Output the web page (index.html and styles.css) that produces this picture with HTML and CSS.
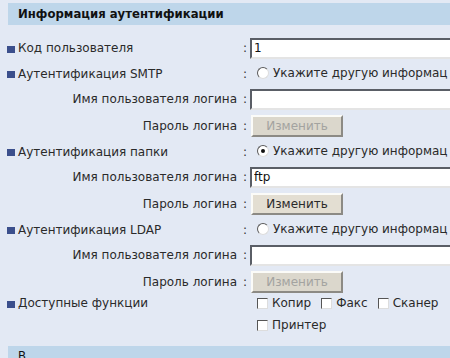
FILE: index.html
```
<!DOCTYPE html>
<html lang="ru">
<head>
  <meta charset="UTF-8">
  <title>Информация аутентификации</title>
  <link rel="stylesheet" href="styles.css">
</head>
<body>
  <div class="panel">
    <div class="section-head">Информация аутентификации</div>

    <div class="form">
      <div class="row row-input">
        <div class="label main"><span class="bullet"></span>Код пользователя</div>
        <div class="colon">:</div>
        <div class="value"><input class="text" type="text" value="1"></div>
      </div>

      <div class="row row-radio">
        <div class="label main"><span class="bullet"></span>Аутентификация SMTP</div>
        <div class="colon">:</div>
        <div class="value"><label class="opt"><span class="radio"></span>Укажите другую информац</label></div>
      </div>
      <div class="row row-input">
        <div class="label sub">Имя пользователя логина</div>
        <div class="colon">:</div>
        <div class="value"><input class="text" type="text" value=""></div>
      </div>
      <div class="row row-button">
        <div class="label sub">Пароль логина</div>
        <div class="colon">:</div>
        <div class="value"><button class="btn" disabled>Изменить</button></div>
      </div>

      <div class="row row-radio">
        <div class="label main"><span class="bullet"></span>Аутентификация папки</div>
        <div class="colon">:</div>
        <div class="value"><label class="opt"><span class="radio checked"></span>Укажите другую информац</label></div>
      </div>
      <div class="row row-input">
        <div class="label sub">Имя пользователя логина</div>
        <div class="colon">:</div>
        <div class="value"><input class="text" type="text" value="ftp"></div>
      </div>
      <div class="row row-button">
        <div class="label sub">Пароль логина</div>
        <div class="colon">:</div>
        <div class="value"><button class="btn">Изменить</button></div>
      </div>

      <div class="row row-radio">
        <div class="label main"><span class="bullet"></span>Аутентификация LDAP</div>
        <div class="colon">:</div>
        <div class="value"><label class="opt"><span class="radio"></span>Укажите другую информац</label></div>
      </div>
      <div class="row row-input">
        <div class="label sub">Имя пользователя логина</div>
        <div class="colon">:</div>
        <div class="value"><input class="text" type="text" value=""></div>
      </div>
      <div class="row row-button">
        <div class="label sub">Пароль логина</div>
        <div class="colon">:</div>
        <div class="value"><button class="btn" disabled>Изменить</button></div>
      </div>

      <div class="row row-check">
        <div class="label main"><span class="bullet"></span>Доступные функции</div>
        <div class="colon"></div>
        <div class="value checks">
          <label class="opt"><span class="check"></span>Копир</label>
          <label class="opt"><span class="check"></span>Факс</label>
          <label class="opt"><span class="check"></span>Сканер</label>
          <label class="opt"><span class="check"></span>Принтер</label>
        </div>
      </div>
    </div>

    <div class="section-head next">В</div>
  </div>
</body>
</html>
```

FILE: styles.css
```
body {
  margin: 0;
  background: #e3e9f4;
  font-family: "DejaVu Sans", Verdana, sans-serif;
  font-size: 12px;
  color: #2a2a2a;
  overflow: hidden;
}

.panel {
  padding: 3px 0 0 8px;
  width: 600px;
}

.section-head {
  background: #bed6ea;
  height: 22px;
  line-height: 22px;
  padding-left: 10px;
  font-weight: bold;
  font-size: 11.7px;
  color: #111;
}

.section-head.next {
  font-weight: normal;
  line-height: 20px;
}

.form {
  padding: 10px 0 13px 0;
}

.row {
  display: grid;
  grid-template-columns: 232px 10px 1fr;
  align-items: center;
}
.row-input { height: 26px; }
.row-button { height: 27px; }
.row-radio { height: 25px; }
.row-check {
  align-items: start;
  padding-top: 1px;
  line-height: 15px;
}

.label {
  white-space: nowrap;
}
.label.main {
  display: flex;
  align-items: center;
}
.label.sub {
  text-align: right;
  padding-right: 3px;
}

.bullet {
  display: inline-block;
  width: 8px;
  height: 7px;
  background: #3b4f8c;
  margin: 2px 3px 0 -1px;
}

.colon {
  text-align: center;
  color: #333;
}

.value {
  white-space: nowrap;
  overflow: hidden;
}

.text {
  width: 260px;
  height: 21px;
  box-sizing: border-box;
  border: 2px solid;
  border-color: #5a5e66 #e4e4e4 #e4e4e4 #5a5e66;
  background: #fff;
  font-family: inherit;
  font-size: 12px;
  padding: 0 2px;
  margin: 0;
  color: #111;
  display: block;
}

.btn {
  width: 92px;
  height: 22px;
  margin: 0 0 0 1px;
  padding: 0;
  font-family: inherit;
  font-size: 12px;
  background: #e3ded2;
  color: #2a2a2a;
  border: 2px solid;
  border-color: #fbfbf8 #8c8a84 #8c8a84 #fbfbf8;
  display: block;
}
.btn:disabled {
  background: #dbd7cc;
  color: #a3a3a0;
}

.opt {
  display: inline-flex;
  align-items: center;
  margin-left: 7px;
}

.radio {
  width: 10px;
  height: 10px;
  border: 1px solid;
  border-color: #5a5a5a #ddd #ddd #5a5a5a;
  border-radius: 50%;
  background: #fff;
  margin-right: 4px;
  position: relative;
}
.radio.checked::after {
  content: "";
  position: absolute;
  left: 3px;
  top: 3px;
  width: 4px;
  height: 4px;
  border-radius: 50%;
  background: #111;
}

.checks {
  display: flex;
  flex-wrap: wrap;
  width: 225px;
  row-gap: 7px;
  white-space: normal;
}
.checks .opt {
  margin-right: 10px;
}
.checks .opt + .opt {
  margin-left: 0;
}
.checks .opt:last-child {
  margin-left: 7px;
}
.check {
  width: 9px;
  height: 9px;
  border: 1px solid;
  border-color: #555 #ddd #ddd #555;
  background: #fff;
  margin-right: 4px;
}
```
